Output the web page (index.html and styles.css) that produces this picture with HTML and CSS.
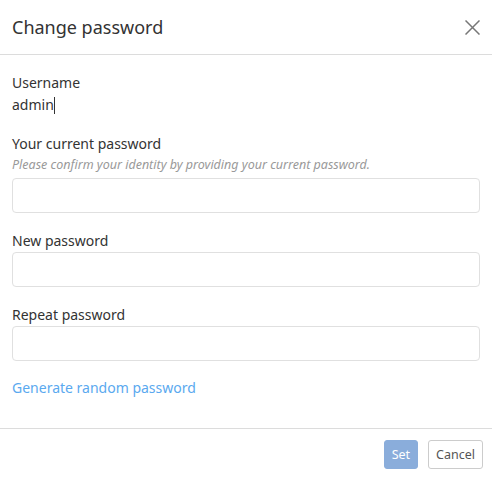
FILE: index.html
```html
<!DOCTYPE html>
<html>
<head>
<meta charset="utf-8">
<link rel="stylesheet" href="styles.css">
</head>
<body>
<div class="dialog">
  <div class="header">
    <div class="title">Change password</div>
    <svg class="close" width="15" height="15" viewBox="0 0 15 15"><path d="M0.5 0.5L14.5 14.5M14.5 0.5L0.5 14.5" stroke="#777" stroke-width="1.5" fill="none"/></svg>
  </div>
  <div class="body">
    <div class="field">
      <div class="label">Username</div>
      <div class="value">admin<span class="caret"></span></div>
    </div>
    <div class="field">
      <div class="label">Your current password</div>
      <div class="hint">Please confirm your identity by providing your current password.</div>
      <div class="input"></div>
    </div>
    <div class="field">
      <div class="label">New password</div>
      <div class="input"></div>
    </div>
    <div class="field">
      <div class="label">Repeat password</div>
      <div class="input"></div>
    </div>
    <a class="link">Generate random password</a>
  </div>
  <div class="footer">
    <button class="btn btn-primary">Set</button>
    <button class="btn">Cancel</button>
  </div>
</div>
</body>
</html>
```
FILE: styles.css
```css
html, body {
  margin: 0;
  padding: 0;
  background: #fff;
}
body {
  font-family: "Noto Sans", sans-serif;
  color: #333;
  font-size: 14px;
}
.dialog {
  width: 492px;
  display: flex;
  flex-direction: column;
}
.header {
  height: 55px;
  border-bottom: 1px solid #dcdcdc;
  display: flex;
  align-items: center;
  justify-content: space-between;
  padding: 0 12px 0 12px;
  box-sizing: border-box;
}
.title {
  font-size: 18px;
  color: #333;
}
.close {
  display: block;
  margin-top: 0;
}
.body {
  padding: 17px 12px 29px 12px;
  display: flex;
  flex-direction: column;
}
.field {
  display: flex;
  flex-direction: column;
  margin-bottom: 17px;
}
.label {
  font-size: 14px;
  line-height: 22px;
  color: #333;
}
.value {
  font-size: 14px;
  line-height: 22px;
  color: #333;
  display: flex;
  align-items: center;
}
.caret {
  display: inline-block;
  width: 1px;
  height: 17px;
  background: #333;
}
.hint {
  font-size: 12.5px;
  font-style: italic;
  color: #999;
  line-height: 16px;
  margin-top: 2px;
  margin-bottom: 5px;
}
.input {
  height: 35px;
  border: 1px solid #e0e0e0;
  border-radius: 4px;
  box-sizing: border-box;
}
.link {
  color: #5aa9ef;
  font-size: 14px;
  line-height: 22px;
  margin-top: -1px;
}
.footer {
  border-top: 1px solid #dcdcdc;
  display: flex;
  justify-content: flex-end;
  gap: 10px;
  padding: 11px 9px 0 0;
}
.btn {
  font-family: "Noto Sans", sans-serif;
  font-size: 12.5px;
  height: 29px;
  padding: 0 7px;
  border: 1px solid #ccc;
  border-radius: 3px;
  background: #fff;
  color: #555;
}
.btn-primary {
  background: #8aaddb;
  border-color: #8aaddb;
  color: #fff;
}
```
